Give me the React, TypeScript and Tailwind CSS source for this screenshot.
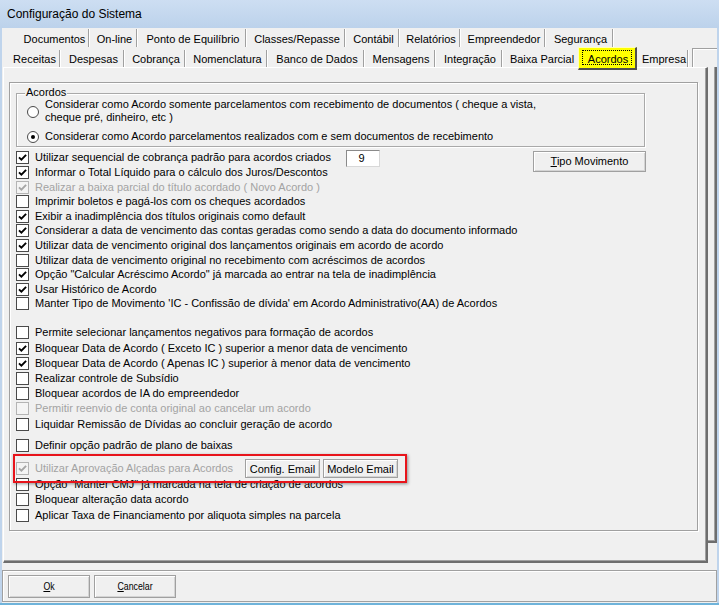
import React from "react";

const FONT = "font-['Liberation_Sans',Arial,sans-serif]";

function Box({ checked, disabled }: { checked?: boolean; disabled?: boolean }) {
  return (
    <span
      className={`relative inline-block w-[13px] h-[13px] shrink-0 border ${
        disabled ? "border-[#b4b4b4] bg-[#f4f4f4]" : "border-[#4a4a4a] bg-white"
      }`}
    >
      {checked && (
        <svg viewBox="0 0 11 11" className="absolute left-0 top-0 w-[11px] h-[11px]">
          <path
            d="M2 5.3 L4.4 7.7 L9.1 2.9"
            fill="none"
            stroke={disabled ? "#a5a5a5" : "#000"}
            strokeWidth="1.9"
          />
        </svg>
      )}
    </span>
  );
}

function Radio({ checked }: { checked?: boolean }) {
  return (
    <span className="relative inline-flex items-center justify-center w-[12px] h-[12px] shrink-0 rounded-full border border-[#4a4a4a] bg-white">
      {checked && <span className="w-[4px] h-[4px] rounded-full bg-black" />}
    </span>
  );
}

function Row({
  checked,
  disabled,
  children,
  h,
  className = "",
}: {
  checked?: boolean;
  disabled?: boolean;
  children: React.ReactNode;
  h: string;
  className?: string;
}) {
  return (
    <div className={`flex items-center ${h} ${className}`}>
      <Box checked={checked} disabled={disabled} />
      <span className={`ml-[6px] whitespace-nowrap leading-[13px] ${disabled ? "text-[#a3a3a3]" : ""}`}>
        {children}
      </span>
    </div>
  );
}

const row1Tabs: [string, number][] = [
  ["Documentos", 72],
  ["On-line", 48],
  ["Ponto de Equilíbrio", 109],
  ["Classes/Repasse", 99],
  ["Contábil", 54],
  ["Relatórios", 61],
  ["Empreendedor", 85],
  ["Segurança", 68],
];

const row2Tabs: [string, number][] = [
  ["Receitas", 54],
  ["Despesas", 64],
  ["Cobrança", 61],
  ["Nomenclatura", 82],
  ["Banco de Dados", 97],
  ["Mensagens", 71],
  ["Integração", 67],
];

function Tab({ label, w, h, sep = true }: { label: string; w: number; h: string; sep?: boolean }) {
  return (
    <div
      style={{ width: w }}
      className={`${h} shrink-0 flex items-center justify-center pl-[4px] pt-[2px] whitespace-nowrap ${
        sep ? "border-r border-r-[#a0a0a0] shadow-[1px_0_0_#ffffff]" : ""
      }`}
    >
      {label}
    </div>
  );
}

function Btn({ children, className = "" }: { children: React.ReactNode; className?: string }) {
  return (
    <div
      className={`shrink-0 flex items-center justify-center bg-[#f0f0f0] border border-[#a0a0a0] shadow-[inset_1px_1px_0_#ffffff,inset_-1px_-1px_0_#d4d4d4] ${className}`}
    >
      {children}
    </div>
  );
}

export default function App() {
  return (
    <div className={`relative w-[719px] h-[605px] overflow-hidden bg-[#bfd4ec] flex flex-col text-[11px] text-black ${FONT}`}>
      {/* Title bar */}
      <div className="h-[28px] shrink-0 flex items-center pl-[7px] bg-gradient-to-b from-[#cddef2] to-[#bcd2eb]">
        <span className="text-[12px] leading-[14px] text-black">Configuração do Sistema</span>
      </div>

      {/* Body */}
      <div className="flex-1 ml-[2px] mr-[2px] bg-[#f0f0f0] flex flex-col">
        {/* Tab row 1 */}
        <div className="mt-[1px] h-[18px] pl-[15px] flex">
          {row1Tabs.map(([l, w]) => (
            <Tab key={l} label={l} w={w} h="h-[18px]" />
          ))}
        </div>
        {/* Tab row 2 */}
        <div className="h-[20px] pl-[4px] flex items-start">
          <div className="flex items-end h-[20px]">
            {row2Tabs.map(([l, w]) => (
              <Tab key={l} label={l} w={w} h="h-[17px]" />
            ))}
            <Tab label="Baixa Parcial" w={76} h="h-[17px]" sep={false} />
          </div>
          <div className="relative z-10 w-[59px] h-[23px] shrink-0 bg-[#ffff00] border-t border-l border-t-[#ffffb8] border-l-[#ffffb8] border-r-2 border-b-2 border-r-[#4f4f4f] border-b-[#4f4f4f] flex justify-center pt-[5px] pl-[2px]">
            <span className="leading-[13px]">Acordos</span>
            <span className="absolute left-[3px] right-[3px] top-[2px] bottom-[3px] border border-dotted border-black" />
          </div>
          <div className="flex items-end h-[20px]">
            <Tab label="Empresa" w={51} h="h-[17px]" />
          </div>
          <div className="flex-1 self-end h-[19px] ml-[4px] border-l border-t border-[#a0a0a0] shadow-[inset_1px_1px_0_#ffffff]" />
        </div>

        {/* Page + strip */}
        <div className="flex h-[496px] shrink-0">
          <div className="ml-[1px] w-[705px] h-[496px] shrink-0 border-t border-l border-t-[#ffffff] border-l-[#ffffff] border-r-2 border-b-2 border-r-[#6d6d6d] border-b-[#6d6d6d] shadow-[inset_-1px_-1px_0_#a0a0a0]">
            {/* inner group */}
            <div className="ml-[5px] mt-[14px] w-[689px] h-[449px] border border-[#a0a0a0] shadow-[1px_1px_0_#ffffff,inset_1px_1px_0_#ffffff] pl-[6px] flex flex-col">
              {/* Acordos groupbox */}
              <div className="relative mt-[10px] w-[629px] h-[54px] shrink-0 border border-[#a9a9a9] shadow-[1px_1px_0_#ffffff,inset_1px_1px_0_#ffffff]">
                <span className="absolute left-[8px] top-[-8px] px-[1px] bg-[#f0f0f0] leading-[13px]">Acordos</span>
                <div className="mt-[4px] pl-[10px] flex items-start">
                  <span className="mt-[7.5px] flex">
                    <Radio />
                  </span>
                  <span className="ml-[6px] leading-[13px] whitespace-nowrap">
                    Considerar como Acordo somente parcelamentos com recebimento de documentos ( cheque a vista,
                    <br />
                    cheque pré, dinheiro, etc )
                  </span>
                </div>
                <div className="mt-[6px] pl-[10px] flex items-center h-[13px]">
                  <Radio checked />
                  <span className="ml-[6px] leading-[13px] whitespace-nowrap">
                    Considerar como Acordo parcelamentos realizados com e sem documentos de recebimento
                  </span>
                </div>
              </div>

              {/* Row 1 with edit and button */}
              <div className="mt-[3.7px] flex items-center h-[14.6px] shrink-0">
                <Box checked />
                <span className="ml-[6px] w-[311px] whitespace-nowrap leading-[13px]">
                  Utilizar sequencial de cobrança padrão para acordos criados
                </span>
                <div className="self-start mt-[-1px] w-[34px] h-[17px] shrink-0 bg-white border border-t-[#8a8a8a] border-l-[#8a8a8a] border-r-[#d8d8d8] border-b-[#d8d8d8] flex items-center justify-center pr-[3px] leading-[13px]">
                  9
                </div>
                <Btn className="self-start ml-[153px] w-[113px] h-[21px]">
                  <span>
                    <span className="underline">T</span>ipo Movimento
                  </span>
                </Btn>
              </div>
              <Row h="h-[14.6px]" checked>Informar o Total Líquido para o cálculo dos Juros/Descontos</Row>
              <Row h="h-[14.6px]" checked disabled>Realizar a baixa parcial do título acordado ( Novo Acordo )</Row>
              <Row h="h-[14.6px]">Imprimir boletos e pagá-los com os cheques acordados</Row>
              <Row h="h-[14.6px]" checked>Exibir a inadimplência dos títulos originais como default</Row>
              <Row h="h-[14.6px]" checked>
                Considerar a data de vencimento das contas geradas como sendo a data do documento informado
              </Row>
              <Row h="h-[14.6px]" checked>
                Utilizar data de vencimento original dos lançamentos originais em acordo de acordo
              </Row>
              <Row h="h-[14.6px]">Utilizar data de vencimento original no recebimento com acréscimos de acordos</Row>
              <Row h="h-[14.6px]" checked>
                Opção "Calcular Acréscimo Acordo" já marcada ao entrar na tela de inadimplência
              </Row>
              <Row h="h-[14.6px]" checked>Usar Histórico de Acordo</Row>
              <Row h="h-[14.6px]">
                Manter Tipo de Movimento 'IC - Confissão de dívida' em Acordo Administrativo(AA) de Acordos
              </Row>

              <Row h="h-[15.2px]" className="mt-[14.1px]">
                Permite selecionar lançamentos negativos para formação de acordos
              </Row>
              <Row h="h-[15.2px]" checked>
                Bloquear Data de Acordo ( Exceto IC ) superior a menor data de vencimento
              </Row>
              <Row h="h-[15.2px]" checked>
                Bloquear Data de Acordo ( Apenas IC ) superior à menor data de vencimento
              </Row>
              <Row h="h-[15.2px]">Realizar controle de Subsídio</Row>
              <Row h="h-[15.2px]">Bloquear acordos de IA do empreendedor</Row>
              <Row h="h-[15.2px]" disabled>Permitir reenvio de conta original ao cancelar um acordo</Row>
              <Row h="h-[15.2px]">Liquidar Remissão de Dívidas ao concluir geração de acordo</Row>

              <Row h="h-[15px]" className="mt-[6.2px]">Definir opção padrão de plano de baixas</Row>

              <div className="mt-[8.5px] flex items-center h-[15px] shrink-0">
                <Box checked disabled />
                <span className="ml-[6px] w-[210px] whitespace-nowrap leading-[13px] text-[#a3a3a3]">
                  Utilizar Aprovação Alçadas para Acordos
                </span>
                <Btn className="w-[75px] h-[19px]">Config. Email</Btn>
                <Btn className="ml-[3px] w-[75px] h-[19px]">Modelo Email</Btn>
              </div>
              <Row h="h-[15.5px]" className="mt-[0.25px]">
                Opção "Manter CMJ" já marcada na tela de criação de acordos
              </Row>
              <Row h="h-[15.5px]">Bloquear alteração data acordo</Row>
              <Row h="h-[15.5px]">Aplicar Taxa de Financiamento por aliquota simples na parcela</Row>
            </div>
          </div>
          <div className="w-[9px] h-[476px] shrink-0 border-r-2 border-b-2 border-r-[#6d6d6d] border-b-[#6d6d6d] shadow-[inset_-1px_-1px_0_#a0a0a0]" />
        </div>

        {/* Bottom panel */}
        <div className="mt-[7px] h-[32px] shrink-0 border border-[#a0a0a0] shadow-[inset_1px_1px_0_#ffffff] flex items-start pt-[4px] pl-[5px]">
          <Btn className="w-[82px] h-[23px]">
            <span className="inline-block scale-x-[0.8]">
              <span className="underline">O</span>k
            </span>
          </Btn>
          <Btn className="ml-[4px] w-[82px] h-[23px]">
            <span className="inline-block scale-x-[0.8]">
              <span className="underline">C</span>ancelar
            </span>
          </Btn>
        </div>
      </div>
      <div className="h-[2px] shrink-0 bg-[#6fb3da]" />

      {/* red annotation box */}
      <div className="pointer-events-none absolute left-[13px] top-[454px] w-[394px] h-[29px] border-2 border-[#e8141b] shadow-[1px_1px_3px_rgba(0,0,0,0.4)]" />
    </div>
  );
}
